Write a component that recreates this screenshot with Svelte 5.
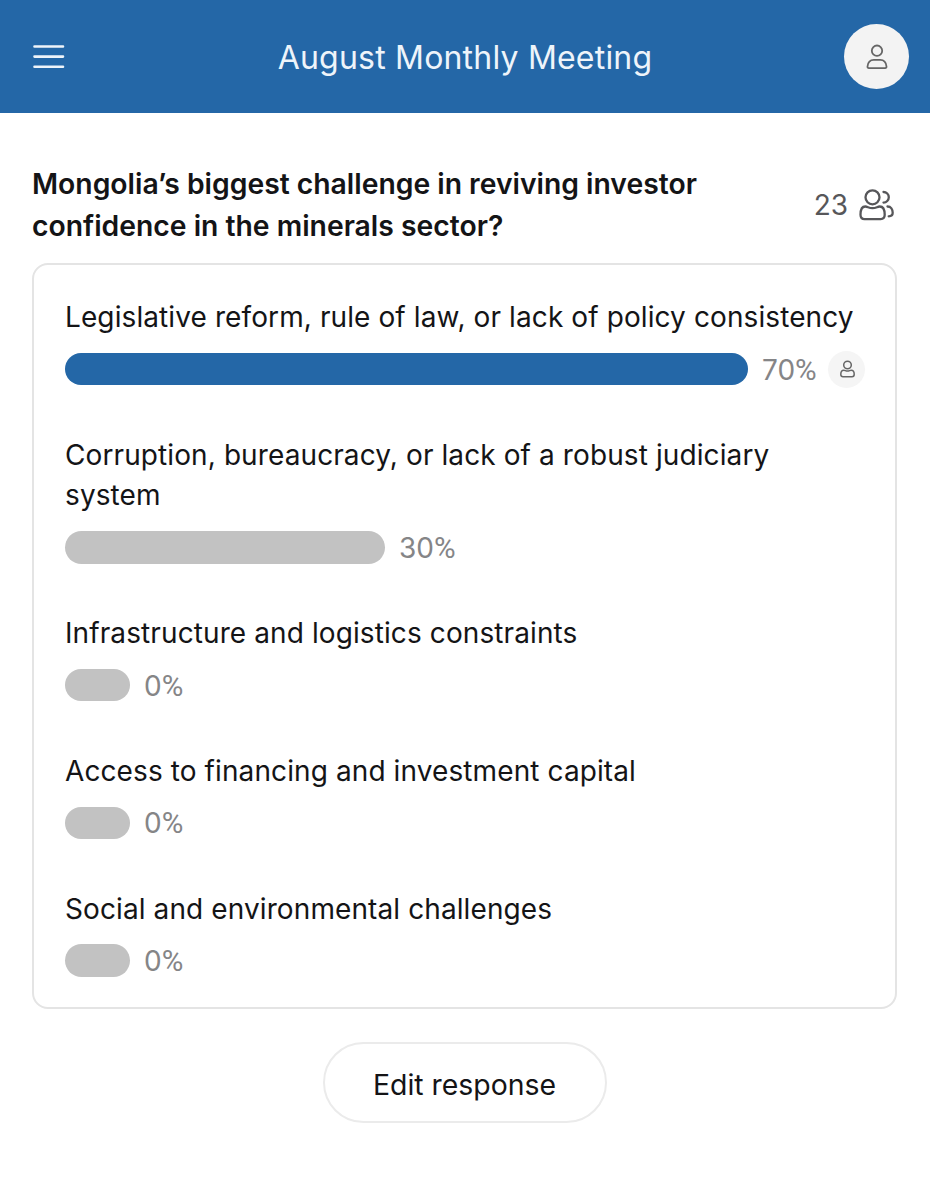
<script>
	const title = 'August Monthly Meeting'
	const question = 'Mongolia’s biggest challenge in reviving investor confidence in the minerals sector?'
	const voters = 23

	let options = [
		{ label: 'Legislative reform, rule of law, or lack of policy consistency', percent: 70, width: 683, mine: true },
		{ label: 'Corruption, bureaucracy, or lack of a robust judiciary system', percent: 30, width: 320 },
		{ label: 'Infrastructure and logistics constraints', percent: 0, width: 65 },
		{ label: 'Access to financing and investment capital', percent: 0, width: 65 },
		{ label: 'Social and environmental challenges', percent: 0, width: 65 }
	]
</script>

<header>
	<button class="menu" aria-label="Menu">
		<svg width="32" height="26" viewBox="0 0 32 26" stroke="currentColor" stroke-width="2.6" stroke-linecap="round">
			<path d="M1.500 2.500h28.500M1.500 12.600h28.500M1.500 22.700h28.500" />
		</svg>
	</button>
	<h1>{title}</h1>
	<div class="avatar">
		<svg width="28" height="28" viewBox="0 0 28 28" fill="none" stroke="currentColor" stroke-width="1.8">
			<circle cx="14" cy="7.700" r="5.200" />
			<path d="M5.900 25.100c-1 0-1.500-.6-1.400-1.600.4-4.300 2.900-6.700 6.300-6.700h6.400c3.400 0 5.900 2.400 6.300 6.700.1 1-.4 1.600-1.400 1.600z" stroke-linejoin="round" />
		</svg>
	</div>
</header>

<main>
	<div class="question">
		<h2>{question}</h2>
		<div class="voters">
			<span>{voters}</span>
			<svg width="36" height="34" viewBox="0 0 36 34" fill="none" stroke="currentColor" stroke-width="2.3" stroke-linecap="round" stroke-linejoin="round">
				<circle cx="13.500" cy="9.300" r="7" />
				<path d="M6.300 18.500c2.300 0 3.500 1.700 7.200 1.700s4.900-1.700 7.200-1.700c3.500 0 5 4 5 8.300 0 3-1.500 4.300-4 4.300H5.500c-2.500 0-4-1.300-4-4.300 0-4.300 1.300-8.300 4.800-8.300z" />
				<path d="M24.500 4a5.300 5.300 0 0 1 0 10.600M28.500 18.500c3.500 0 5.200 3 5.200 6.300 0 2.200-1.200 3.500-4 3.500" />
			</svg>
		</div>
	</div>

	<section class="poll">
		{#each options as option}
			<div class="option">
				<p>{option.label}</p>
				<div class="result">
					<div class="bar" class:mine={option.mine} style="width: {option.width}px"></div>
					<span class="percent">{option.percent}<span class="sign">%</span></span>
					{#if option.mine}
						<div class="badge">
							<svg width="18" height="20" viewBox="0 0 18 20" fill="none" stroke="currentColor" stroke-width="1.5">
								<circle cx="9.500" cy="6" r="3.800" />
								<path d="M5.800 11.200c1.300 0 1.900.9 3.700.9s2.400-.9 3.700-.9c1.900 0 3 2 3 4 0 1.800-.8 2.500-2.200 2.500h-9c-1.400 0-2.200-.7-2.200-2.500 0-2 1.100-4 3-4z" />
							</svg>
						</div>
					{/if}
				</div>
			</div>
		{/each}
	</section>

	<button class="edit">Edit response</button>
</main>

<style>
	:global(body) {
		margin: 0;
		background: #fff;
	}

	header, main, button {
		font-family: Inter, sans-serif;
		color: #141416;
	}

	header {
		box-sizing: border-box;
		height: 113px;
		padding: 0 21px 0 33px;
		display: flex;
		justify-content: space-between;
		align-items: center;
		background: #2467a7;
	}

	h1 {
		margin: 0;
		padding: 1px 0 0;
		flex: 1;
		text-align: center;
		font-size: 32px;
		font-weight: 400;
		letter-spacing: 0.2px;
		color: #eef4fa;
	}

	.menu {
		width: 53px;
		padding: 0;
		border: none;
		background: none;
		color: #eef4fa;
	}

	svg {
		display: block;
	}

	.avatar, .badge {
		flex: none;
		display: grid;
		place-items: center;
		border-radius: 50%;
		background: #f3f3f3;
		color: #666;
	}

	.avatar {
		width: 65px;
		height: 65px;
	}

	main {
		padding: 50px 33px 0 32px;
	}

	.question {
		display: flex;
		justify-content: space-between;
		align-items: center;
	}

	h2 {
		margin: 0;
		width: 700px;
		font-size: 28.3px;
		font-weight: 600;
		line-height: 42px;
	}

	.voters {
		display: flex;
		align-items: center;
		gap: 11px;
		padding-right: 2px;
		font-size: 28px;
		color: #57575a;
	}

	.poll {
		box-sizing: border-box;
		height: 746px;
		margin-top: 16px;
		padding: 32px 30px 0 31px;
		border: 2px solid #e4e4e4;
		border-radius: 16px;
	}

	.option {
		margin-bottom: 44px;
	}

	p {
		margin: 0 0 10px;
		font-size: 28px;
		line-height: 40.4px;
		letter-spacing: 0.1px;
	}

	.result {
		height: 43.4px;
		display: flex;
		align-items: center;
	}

	.bar {
		flex: none;
		height: 32.5px;
		border-radius: 17px;
		background: #c2c2c2;
	}

	.bar.mine {
		background: #2467a7;
	}

	.percent {
		flex: none;
		margin-left: 14px;
		padding-top: 1px;
		font-size: 28px;
		line-height: 34px;
		color: #858587;
	}

	.sign {
		font-family: Roboto, sans-serif;
		font-size: 29.5px;
	}

	.badge {
		width: 37px;
		height: 37px;
		margin-left: auto;
		background: #f5f5f5;
	}

	.edit {
		display: block;
		width: 284px;
		height: 81px;
		margin: 33px auto 0;
		padding: 3px 0 0;
		border: 2px solid #ebebeb;
		border-radius: 41px;
		background: #fff;
		font-size: 28.4px;
	}
</style>
